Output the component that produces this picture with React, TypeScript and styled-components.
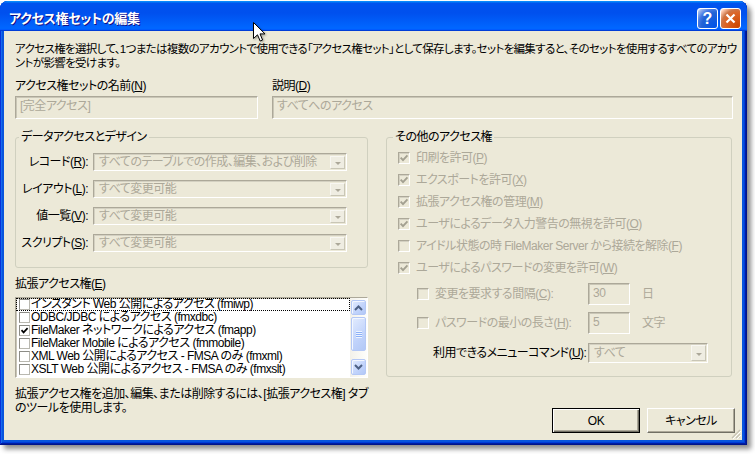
import React from 'react';
import styled, { createGlobalStyle } from 'styled-components';

const GlobalStyle = createGlobalStyle`
  html, body { margin: 0; padding: 0; background: #fff; }
  body {
    font-family: 'Liberation Sans', 'Noto Sans CJK JP', sans-serif;
    font-size: 12px;
    line-height: 14px;
    letter-spacing: -0.5px;
    font-feature-settings: 'palt';
    color: #000;
  }
  u { text-underline-offset: 1px; }
`;

const Page = styled.div`
  position: relative;
  width: 755px;
  height: 454px;
  overflow: hidden;
`;

const Window = styled.div`
  position: relative;
  margin-top: 1px;
  width: 747px;
  height: 444px;
  box-sizing: border-box;
  display: flex;
  flex-direction: column;
  padding: 0 5px 5px 4px;
  border-radius: 8px 8px 0 0;
  background: #0855dd;
  box-shadow:
    inset -1px -1px #00138c,
    inset 1px 1px #0831d9,
    inset -2px -2px #001ea0,
    inset 2px 2px #166aee,
    inset -3px -3px #003bda,
    inset 3px 3px #0855dd,
    4px 4px 5px rgba(0, 0, 0, 0.45);
`;

const TitleBar = styled.div`
  flex: none;
  height: 30px;
  margin: 0 -5px 0 -4px;
  box-sizing: border-box;
  padding: 7px 6px 0 9px;
  display: flex;
  align-items: flex-start;
  gap: 2px;
  border-radius: 8px 8px 0 0;
  background: linear-gradient(
    180deg,
    #0997ff,
    #0053ee 8%,
    #0050ee 40%,
    #06f 88%,
    #06f 93%,
    #005bff 95%,
    #003dd7 96%,
    #003dd7
  );
`;

const Title = styled.div`
  flex: 1;
  color: #fff;
  font-size: 13px;
  font-weight: bold;
  line-height: 21px;
  letter-spacing: -0.3px;
  text-shadow: 1px 1px #0f1089;
`;

const CaptionButton = styled.div<{ $kind: 'help' | 'close' }>`
  width: 21px;
  height: 21px;
  box-sizing: border-box;
  border: 1px solid #fff;
  border-radius: 3px;
  display: flex;
  align-items: center;
  justify-content: center;
  color: #fff;
  font-family: 'Liberation Sans', sans-serif;
  font-size: 16px;
  font-weight: bold;
  letter-spacing: 0;
  background: ${(p) =>
    p.$kind === 'close'
      ? 'radial-gradient(circle at 90% 90%, #cc4600 0%, #dc6527 55%, #cd7546 70%, #ffccb2 90%, #fff 100%)'
      : 'radial-gradient(circle at 90% 90%, #0054e9 0%, #2263d5 55%, #4479e4 70%, #a3bbec 90%, #fff 100%)'};
`;

const Client = styled.div`
  position: relative;
  flex: 1;
  display: flex;
  flex-direction: column;
  padding: 11px 7px 7px 11px;
  background: #ece9d8;
`;

const SizeGrip = styled.svg`
  position: absolute;
  right: 1px;
  bottom: 1px;
`;

const Intro = styled.p`
  margin: 0;
  white-space: nowrap;
  font-size: 11.5px;
  letter-spacing: -0.65px;
`;

const FieldGrid = styled.div`
  display: grid;
  grid-template-columns: 243px 1fr;
  column-gap: 14px;
  row-gap: 3px;
  margin-top: 9px;
  padding-right: 2px;
`;

const Label = styled.div`
  white-space: nowrap;
`;

const TextBox = styled.div<{ $width?: number; $height?: number }>`
  ${(p) => (p.$width ? `width: ${p.$width}px;` : '')}
  height: ${(p) => p.$height ?? 23}px;
  box-sizing: border-box;
  padding: 0 4px;
  border: 1px solid;
  border-color: #aca899 #fff #fff #aca899;
  box-shadow: inset 1px 1px #c9c6b6;
  color: #aca899;
  line-height: ${(p) => (p.$height ?? 23) - 4}px;
  white-space: nowrap;
`;

const Main = styled.div`
  display: grid;
  grid-template-columns: 353px 1fr;
  column-gap: 18px;
  margin-top: 11px;
`;

const Column = styled.div`
  display: flex;
  flex-direction: column;
`;

const Group = styled.fieldset<{ $right?: number }>`
  margin: 0 ${(p) => p.$right ?? 0}px 0 0;
  padding: 0;
  min-width: 0;
  border: 1px solid #d0d0bf;
  border-radius: 3px;
`;

const Legend = styled.legend<{ $indent: number }>`
  margin-left: ${(p) => p.$indent}px;
  padding: 0 2px;
  line-height: 14px;
`;

const ComboGrid = styled.div`
  display: grid;
  grid-template-columns: 72px 254px;
  column-gap: 5px;
  row-gap: 9px;
  align-items: center;
  padding: 9px 0 15px;
`;

const RowLabel = styled.div`
  text-align: right;
  white-space: nowrap;
`;

const Combo = styled.div<{ $width?: number; $height?: number }>`
  ${(p) => (p.$width ? `width: ${p.$width}px;` : '')}
  height: ${(p) => p.$height ?? 18}px;
  box-sizing: border-box;
  display: flex;
  align-items: center;
  padding: 0 1px 0 5px;
  border: 1px solid;
  border-color: #aca899 #fff #fff #aca899;
  box-shadow: inset 1px 1px #d3d0c1;
  color: #aca899;
`;

const ComboText = styled.span`
  flex: 1;
  overflow: hidden;
  white-space: nowrap;
`;

const DropButton = styled.span<{ $height?: number }>`
  width: 15px;
  height: ${(p) => p.$height ?? 13}px;
  box-sizing: border-box;
  display: flex;
  align-items: center;
  justify-content: center;
  border: 1px solid;
  border-color: #f8f7f2 #c9c6b6 #c9c6b6 #f8f7f2;
  background: #efede2;
`;

const DropArrow = styled.span`
  width: 0;
  height: 0;
  margin-top: 2px;
  border-left: 3px solid transparent;
  border-right: 3px solid transparent;
  border-top: 3px solid #aca899;
`;

const SectionLabel = styled.div`
  margin-top: 9px;
`;

const ListBox = styled.div`
  height: 81px;
  margin-top: 6px;
  box-sizing: border-box;
  display: flex;
  border: 1px solid;
  border-color: #aca899 #fff #fff #aca899;
  box-shadow: inset 1px 1px #c9c6b6;
  background: #fff;
  overflow: hidden;
`;

const Items = styled.div`
  flex: 1;
  min-width: 0;
`;

const Item = styled.div<{ $focused?: boolean }>`
  height: 13px;
  display: flex;
  align-items: center;
  padding-left: 3px;
  white-space: nowrap;
  line-height: 13px;
  outline: ${(p) => (p.$focused ? '1px dotted #000' : 'none')};
  outline-offset: -1px;
`;

const ListCheck = styled.span`
  width: 11px;
  height: 11px;
  flex: none;
  box-sizing: border-box;
  margin-right: 1px;
  display: flex;
  align-items: center;
  justify-content: center;
  border: 1px solid;
  border-color: #8c8c86 #b9b8b0 #b9b8b0 #8c8c86;
  background: #fff;
`;

const ScrollBar = styled.div`
  width: 15px;
  padding: 2px 1px;
  display: flex;
  flex-direction: column;
  background: linear-gradient(90deg, #f3f1ea, #fefefb);
`;

const ScrollButton = styled.div<{ $height: number }>`
  height: ${(p) => p.$height}px;
  box-sizing: border-box;
  display: flex;
  align-items: center;
  justify-content: center;
  border: 1px solid #b4c8f6;
  border-radius: 2px;
  background: linear-gradient(135deg, #e3ecfe, #c1d3fb 60%, #b2c8f6);
  box-shadow: inset 1px 1px #f3f7ff;
`;

const Thumb = styled(ScrollButton)`
  margin-top: 2px;
  margin-bottom: auto;
`;

const Grip = styled.span`
  width: 6px;
  height: 7px;
  background: repeating-linear-gradient(180deg, #eef4fe 0 1px, #8cb0f8 1px 2px);
`;

const Note = styled.p`
  margin: 9px 0 0;
  white-space: nowrap;
`;

const CheckList = styled.div`
  display: flex;
  flex-direction: column;
  padding: 3px 0 13px 11px;
`;

const CheckRow = styled.div`
  height: 22px;
  display: flex;
  align-items: center;
  gap: 6px;
  color: #aca899;
  white-space: nowrap;
`;

const Check = styled.span`
  width: 12px;
  height: 12px;
  flex: none;
  box-sizing: border-box;
  display: flex;
  align-items: center;
  justify-content: center;
  border: 1px solid;
  border-color: #aca899 #fff #fff #aca899;
  box-shadow: inset 1px 1px #d3d0c1;
  background: #ece9d8;
`;

const SubRow = styled.div<{ $top: number; $height: number }>`
  height: ${(p) => p.$height}px;
  margin-top: ${(p) => p.$top}px;
  display: grid;
  grid-template-columns: 171px auto 1fr;
  align-items: center;
  padding-left: 19px;
  color: #aca899;
  white-space: nowrap;
`;

const SubLabel = styled.div`
  display: flex;
  align-items: center;
  gap: 6px;
`;

const Unit = styled.span`
  margin-left: 12px;
`;

const EnabledLabel = styled.span`
  padding-left: 16px;
  color: #000;
`;

const ButtonRow = styled.div`
  display: flex;
  justify-content: flex-end;
  gap: 7px;
  margin-top: 31px;
`;

const Button = styled.button<{ $default?: boolean }>`
  width: 88px;
  height: 25px;
  padding: 0;
  font: inherit;
  letter-spacing: inherit;
  color: #000;
  background: #ece9d8;
  border: 1px solid;
  border-color: ${(p) => (p.$default ? '#000' : '#fff #716f64 #716f64 #fff')};
  box-shadow: ${(p) =>
    p.$default
      ? 'inset 1px 1px #fff, inset -1px -1px #716f64, inset -2px -2px #aca899'
      : 'inset -1px -1px #aca899'};
`;

const Cursor = styled.svg`
  position: absolute;
  left: 253px;
  top: 21px;
  filter: drop-shadow(1px 1px 1px rgba(0, 0, 0, 0.35));
`;

const comboRows = [
  { label: 'レコード', key: 'R', value: 'すべてのテーブルでの作成、編集、および削除' },
  { label: 'レイアウト', key: 'L', value: 'すべて変更可能' },
  { label: '値一覧', key: 'V', value: 'すべて変更可能' },
  { label: 'スクリプト', key: 'S', value: 'すべて変更可能' },
];

const extended = [
  { label: 'インスタント Web 公開によるアクセス (fmiwp)', checked: false },
  { label: 'ODBC/JDBC によるアクセス (fmxdbc)', checked: false },
  { label: 'FileMaker ネットワークによるアクセス (fmapp)', checked: true },
  { label: 'FileMaker Mobile によるアクセス (fmmobile)', checked: false },
  { label: 'XML Web 公開によるアクセス - FMSA のみ (fmxml)', checked: false },
  { label: 'XSLT Web 公開によるアクセス - FMSA のみ (fmxslt)', checked: false },
];

const privileges = [
  { label: '印刷を許可', key: 'P', checked: true },
  { label: 'エクスポートを許可', key: 'X', checked: true },
  { label: '拡張アクセス権の管理', key: 'M', checked: true },
  { label: 'ユーザによるデータ入力警告の無視を許可', key: 'O', checked: true },
  { label: 'アイドル状態の時 FileMaker Server から接続を解除', key: 'F', checked: false },
  { label: 'ユーザによるパスワードの変更を許可', key: 'W', checked: true },
];

function Mnemonic({ text, k, colon }: { text: string; k: string; colon?: boolean }) {
  return (
    <>
      {text}(<u>{k}</u>){colon ? ':' : ''}
    </>
  );
}

function Tick({ color, size }: { color: string; size: number }) {
  return (
    <svg width={size} height={size} viewBox="0 0 9 9">
      <path d="M1.5 4.2 L3.6 6.4 L7.6 2.2" fill="none" stroke={color} strokeWidth="1.7" />
    </svg>
  );
}

function Chevron({ up }: { up?: boolean }) {
  return (
    <svg width="9" height="6" viewBox="0 0 9 6">
      <polyline
        points={up ? '1,5 4.5,1.5 8,5' : '1,1 4.5,4.5 8,1'}
        fill="none"
        stroke="#4d6185"
        strokeWidth="2"
      />
    </svg>
  );
}

function Dropdown({ value, width, height, btnHeight }: { value: string; width?: number; height?: number; btnHeight?: number }) {
  return (
    <Combo $width={width} $height={height}>
      <ComboText>{value}</ComboText>
      <DropButton $height={btnHeight}>
        <DropArrow />
      </DropButton>
    </Combo>
  );
}

export default function App(): React.ReactElement {
  return (
    <Page>
      <GlobalStyle />
      <Window>
        <TitleBar>
          <Title>アクセス権セットの編集</Title>
          <CaptionButton $kind="help">?</CaptionButton>
          <CaptionButton $kind="close">
            <svg width="11" height="11" viewBox="0 0 11 11">
              <path d="M1.5 1.5 L9.5 9.5 M9.5 1.5 L1.5 9.5" stroke="#fff" strokeWidth="2.2" />
            </svg>
          </CaptionButton>
        </TitleBar>

        <Client>
          <Intro>
            アクセス権を選択して、1つまたは複数のアカウントで使用できる「アクセス権セット」として保存します。セットを編集すると、そのセットを使用するすべてのアカウ
            <br />
            ントが影響を受けます。
          </Intro>

          <FieldGrid>
            <Label>
              <Mnemonic text="アクセス権セットの名前" k="N" />
            </Label>
            <Label>
              <Mnemonic text="説明" k="D" />
            </Label>
            <TextBox>[完全アクセス]</TextBox>
            <TextBox>すべてへのアクセス</TextBox>
          </FieldGrid>

          <Main>
            <Column>
              <Group>
                <Legend $indent={3}>データアクセスとデザイン</Legend>
                <ComboGrid>
                  {comboRows.map((row) => (
                    <React.Fragment key={row.key}>
                      <RowLabel>
                        <Mnemonic text={row.label} k={row.key} colon />
                      </RowLabel>
                      <Dropdown value={row.value} />
                    </React.Fragment>
                  ))}
                </ComboGrid>
              </Group>

              <SectionLabel>
                <Mnemonic text="拡張アクセス権" k="E" />
              </SectionLabel>
              <ListBox>
                <Items>
                  {extended.map((item, i) => (
                    <Item key={item.label} $focused={i === 0}>
                      <ListCheck>{item.checked && <Tick color="#000" size={9} />}</ListCheck>
                      {item.label}
                    </Item>
                  ))}
                </Items>
                <ScrollBar>
                  <ScrollButton $height={15}>
                    <Chevron up />
                  </ScrollButton>
                  <Thumb $height={34}>
                    <Grip />
                  </Thumb>
                  <ScrollButton $height={16}>
                    <Chevron />
                  </ScrollButton>
                </ScrollBar>
              </ListBox>

              <Note>
                拡張アクセス権を追加、編集、または削除するには、[拡張アクセス権] タブ
                <br />
                のツールを使用します。
              </Note>
            </Column>

            <Column>
              <Group $right={3}>
                <Legend $indent={6}>その他のアクセス権</Legend>
                <CheckList>
                  {privileges.map((p) => (
                    <CheckRow key={p.key}>
                      <Check>{p.checked && <Tick color="#a3a091" size={10} />}</Check>
                      <span>
                        <Mnemonic text={p.label} k={p.key} />
                      </span>
                    </CheckRow>
                  ))}

                  <SubRow $top={4} $height={22}>
                    <SubLabel>
                      <Check />
                      <span>
                        <Mnemonic text="変更を要求する間隔" k="C" colon />
                      </span>
                    </SubLabel>
                    <TextBox $width={42} $height={22}>30</TextBox>
                    <Unit>日</Unit>
                  </SubRow>
                  <SubRow $top={7} $height={22}>
                    <SubLabel>
                      <Check />
                      <span>
                        <Mnemonic text="パスワードの最小の長さ" k="H" colon />
                      </span>
                    </SubLabel>
                    <TextBox $width={42} $height={22}>5</TextBox>
                    <Unit>文字</Unit>
                  </SubRow>
                  <SubRow $top={9} $height={20}>
                    <EnabledLabel>
                      <Mnemonic text="利用できるメニューコマンド" k="U" colon />
                    </EnabledLabel>
                    <Dropdown value="すべて" width={120} height={20} btnHeight={16} />
                  </SubRow>
                </CheckList>
              </Group>

              <ButtonRow>
                <Button $default>OK</Button>
                <Button>キャンセル</Button>
              </ButtonRow>
            </Column>
          </Main>

          <SizeGrip width="11" height="11" viewBox="0 0 11 11">
            <path d="M10 2 L2 10 M10 6 L6 10 M10 9.5 L9.5 10" stroke="#c5c2b2" strokeWidth="1.2" />
            <path d="M11 3 L3 11 M11 7 L7 11" stroke="#fff" strokeWidth="1" />
          </SizeGrip>
        </Client>

        <Cursor width="13" height="20" viewBox="0 0 13 20">
          <path
            d="M0.5 0.5 L0.5 16.5 L4.5 12.8 L7.2 19 L9.6 18 L7 11.9 L12 11.9 Z"
            fill="#fff"
            stroke="#000"
            strokeWidth="1"
          />
        </Cursor>
      </Window>
    </Page>
  );
}
